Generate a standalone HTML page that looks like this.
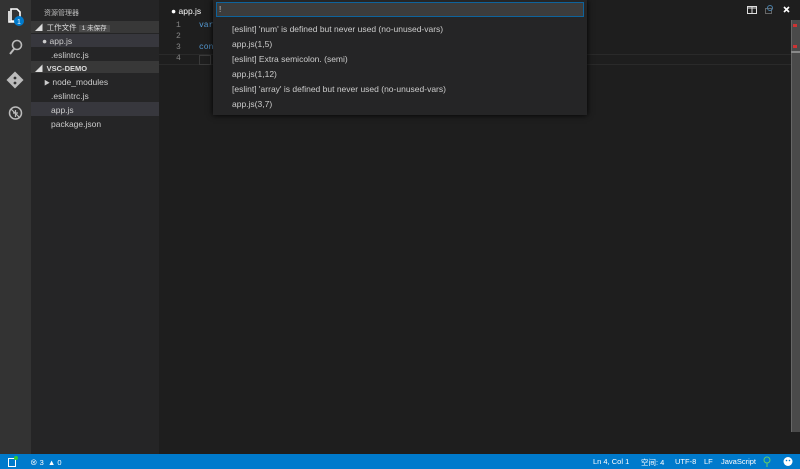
<!DOCTYPE html>
<html><head><style>
*{margin:0;padding:0;box-sizing:border-box}
body{width:800px;height:469px;background:#1e1e1e;font-family:"Liberation Sans","Noto Sans CJK SC",sans-serif;position:relative;overflow:hidden;color:#ccc}
.a{position:absolute}
.t{font-size:8.5px;white-space:nowrap}
.s{position:absolute;top:457px;color:#fff;font-size:7.5px;white-space:nowrap}
</style></head><body>
<div class="a" style="left:0;top:0;width:31px;height:454px;background:#333"></div>
<div class="a" style="left:31px;top:0;width:128px;height:454px;background:#252526"></div>
<svg class="a" style="left:0;top:0" width="31" height="130">
<g fill="none" stroke="#fff" stroke-width="1.6">
<path d="M11 9h6l3 3v9h-9z"/><path d="M9 11v11h8"/>
<circle cx="17" cy="45" r="4.5" stroke="#bbb"/><path d="M14 49l-4 5" stroke="#bbb" stroke-width="2"/>
</g>
<circle cx="19" cy="21" r="5" fill="#007acc"/><text x="19" y="24" fill="#fff" font-size="7" text-anchor="middle" font-family="Liberation Sans">1</text>
<rect x="9" y="74" width="12" height="12" transform="rotate(45 15 80)" fill="#bbb"/>
<circle cx="15" cy="78" r="1.4" fill="#333"/><circle cx="15" cy="83" r="1.4" fill="#333"/>
<circle cx="15.5" cy="113" r="6" fill="none" stroke="#bbb" stroke-width="1.5"/>
<path d="M11 109l9 9M13 113h5M15.5 110v7" stroke="#bbb" stroke-width="1.2"/>
</svg>
<div class="a t" style="left:44px;top:8px;font-size:7px;color:#bbb">资源管理器</div>
<div class="a" style="left:31px;top:21px;width:128px;height:12px;background:#383838"></div>
<div class="a t" style="left:35px;top:22px;font-size:7.5px;color:#ddd">◢&nbsp; 工作文件 <span style="background:#4b4b4b;padding:0 3px;font-size:6.5px">1 未保存</span></div>
<div class="a" style="left:31px;top:34px;width:128px;height:13px;background:#37373d"></div>
<div class="a t" style="left:42px;top:36px;color:#ccc">●&nbsp;app.js</div>
<div class="a t" style="left:51px;top:50px">.eslintrc.js</div>
<div class="a" style="left:31px;top:61px;width:128px;height:12px;background:#383838"></div>
<div class="a t" style="left:35px;top:63px;font-size:7.5px;color:#ddd;font-weight:bold">◢&nbsp; VSC-DEMO</div>
<div class="a t" style="left:44px;top:77px"><span style="font-size:6px">▶</span>&nbsp;node_modules</div>
<div class="a t" style="left:51px;top:91px">.eslintrc.js</div>
<div class="a" style="left:31px;top:102px;width:128px;height:14px;background:#37373d"></div>
<div class="a t" style="left:51px;top:105px">app.js</div>
<div class="a t" style="left:51px;top:119px">package.json</div>
<div class="a t" style="left:171px;top:6px;color:#fff">●&nbsp;app.js</div>
<div class="a" style="left:159px;top:20px;width:632px;height:434px;font-family:'Liberation Mono',monospace;font-size:8px;line-height:11px;color:#858585">
<div class="a" style="left:0;top:34px;width:632px;height:11px;border-top:1px solid #2a2a2a;border-bottom:1px solid #2a2a2a"></div>
<div class="a" style="left:40px;top:35px;width:12px;height:10px;border:1px solid #3a3a3a"></div>
<div class="a" style="left:17px;top:0">1<br>2<br>3<br>4</div>
<div class="a" style="left:40px;top:0;color:#569cd6">var<br><br>con</div>
</div>
<div class="a" style="left:791px;top:20px;width:9px;height:412px;background:#4a4a4a;border-left:1px solid #666"></div>
<div class="a" style="left:793px;top:24px;width:4px;height:3px;background:#c33"></div>
<div class="a" style="left:793px;top:45px;width:4px;height:3px;background:#c33"></div>
<div class="a" style="left:791px;top:51px;width:9px;height:2px;background:#888"></div>
<svg class="a" style="left:740px;top:0" width="60" height="20">
<rect x="7.5" y="6.5" width="9" height="7" fill="none" stroke="#ddd"/><path d="M12 6v8M7 8h10" stroke="#ddd"/>
<rect x="25.5" y="8.5" width="6" height="5" fill="none" stroke="#666"/><circle cx="30" cy="8" r="2.5" fill="none" stroke="#4a7fa8"/>
<path d="M44 7l5 5M49 7l-5 5" stroke="#fff" stroke-width="1.6"/>
</svg>
<div class="a" style="left:213px;top:0;width:374px;height:115px;background:#252526;box-shadow:0 0 6px #000"></div>
<div class="a" style="left:216px;top:2px;width:368px;height:15px;background:#3c3c3c;border:1px solid #0e639c"></div>
<div class="a t" style="left:219px;top:5px;font-size:8px">!</div>
<div class="a t" style="left:232px;top:24px">[eslint] 'num' is defined but never used (no-unused-vars)</div>
<div class="a t" style="left:232px;top:39px">app.js(1,5)</div>
<div class="a t" style="left:232px;top:54px">[eslint] Extra semicolon. (semi)</div>
<div class="a t" style="left:232px;top:69px">app.js(1,12)</div>
<div class="a t" style="left:232px;top:84px">[eslint] 'array' is defined but never used (no-unused-vars)</div>
<div class="a t" style="left:232px;top:99px">app.js(3,7)</div>
<div class="a" style="left:0;top:454px;width:800px;height:15px;background:#007acc"></div>
<svg class="a" style="left:6px;top:455px" width="14" height="13"><rect x="2.5" y="3.5" width="7" height="8" fill="none" stroke="#fff"/><circle cx="10" cy="3" r="2" fill="#3c3"/></svg>
<div class="s" style="left:30px">⊗ 3 &nbsp;▲ 0</div>
<div class="s" style="left:593px">Ln 4, Col 1</div>
<div class="s" style="left:641px">空间: 4</div>
<div class="s" style="left:675px">UTF-8</div>
<div class="s" style="left:704px">LF</div>
<div class="s" style="left:721px">JavaScript</div>
<svg class="a" style="left:762px;top:455px" width="36" height="13"><circle cx="5" cy="5" r="3" fill="none" stroke="#6c6" /><path d="M5 8v4" stroke="#6c6"/><circle cx="26" cy="6.5" r="4.5" fill="#fff"/><circle cx="24.5" cy="5.5" r=".8" fill="#007acc"/><circle cx="27.5" cy="5.5" r=".8" fill="#007acc"/></svg>
</body></html>
